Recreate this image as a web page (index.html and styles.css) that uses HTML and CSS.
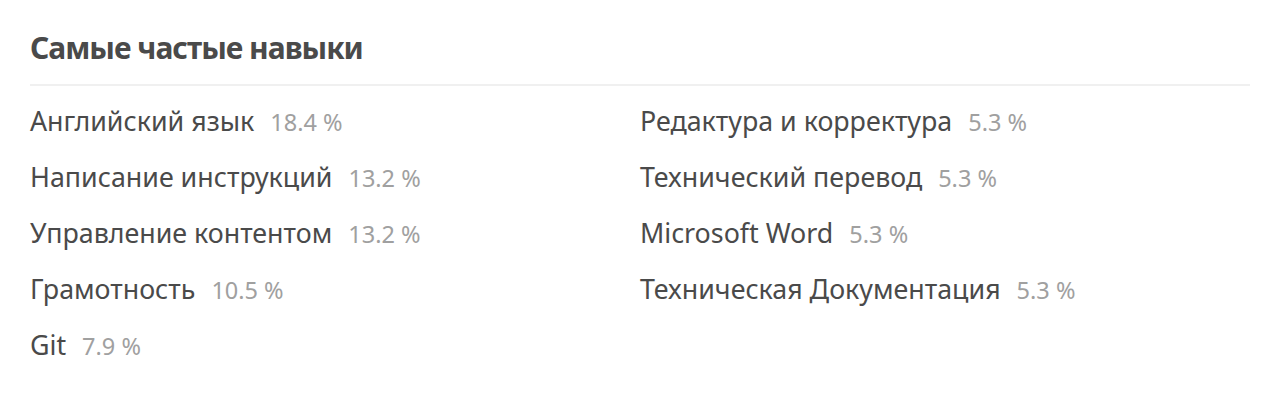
FILE: index.html
```html
<!DOCTYPE html>
<html lang="ru">
<head>
<meta charset="utf-8">
<link rel="stylesheet" href="styles.css">
</head>
<body>
<section class="skills">
  <h2 class="skills-title">Самые частые навыки</h2>
  <div class="skills-grid">
    <ul class="skills-col">
      <li class="skill"><span class="skill-name">Английский язык</span><span class="skill-pct">18.4 %</span></li>
      <li class="skill"><span class="skill-name">Написание инструкций</span><span class="skill-pct">13.2 %</span></li>
      <li class="skill"><span class="skill-name">Управление контентом</span><span class="skill-pct">13.2 %</span></li>
      <li class="skill"><span class="skill-name">Грамотность</span><span class="skill-pct">10.5 %</span></li>
      <li class="skill"><span class="skill-name">Git</span><span class="skill-pct">7.9 %</span></li>
    </ul>
    <ul class="skills-col">
      <li class="skill"><span class="skill-name">Редактура и корректура</span><span class="skill-pct">5.3 %</span></li>
      <li class="skill"><span class="skill-name">Технический перевод</span><span class="skill-pct">5.3 %</span></li>
      <li class="skill"><span class="skill-name">Microsoft Word</span><span class="skill-pct">5.3 %</span></li>
      <li class="skill"><span class="skill-name">Техническая Документация</span><span class="skill-pct">5.3 %</span></li>
    </ul>
  </div>
</section>
</body>
</html>
```
FILE: styles.css
```css
html, body {
  margin: 0;
  padding: 0;
  background: #ffffff;
}
body {
  font-family: "Noto Sans", "Open Sans", sans-serif;
  color: #4a4a4a;
}
.skills {
  padding: 28px 30px 0 30px;
  width: 1220px;
}
.skills-title {
  margin: 0;
  font-size: 30px;
  line-height: 40px;
  font-weight: 700;
  letter-spacing: -1px;
  color: #4a4a4a;
  padding-bottom: 16px;
  border-bottom: 2px solid #f0f0f0;
}
.skills-grid {
  display: grid;
  grid-template-columns: 610px 1fr;
  padding-top: 7px;
}
.skills-col {
  list-style: none;
  margin: 0;
  padding: 0;
}
.skill {
  display: flex;
  align-items: baseline;
  height: 56px;
  line-height: 56px;
}
.skill-name {
  font-size: 26.8px;
  color: #4a4a4a;
}
.skill-pct {
  margin-left: 16px;
  font-size: 23.5px;
  color: #a0a0a0;
}
```
